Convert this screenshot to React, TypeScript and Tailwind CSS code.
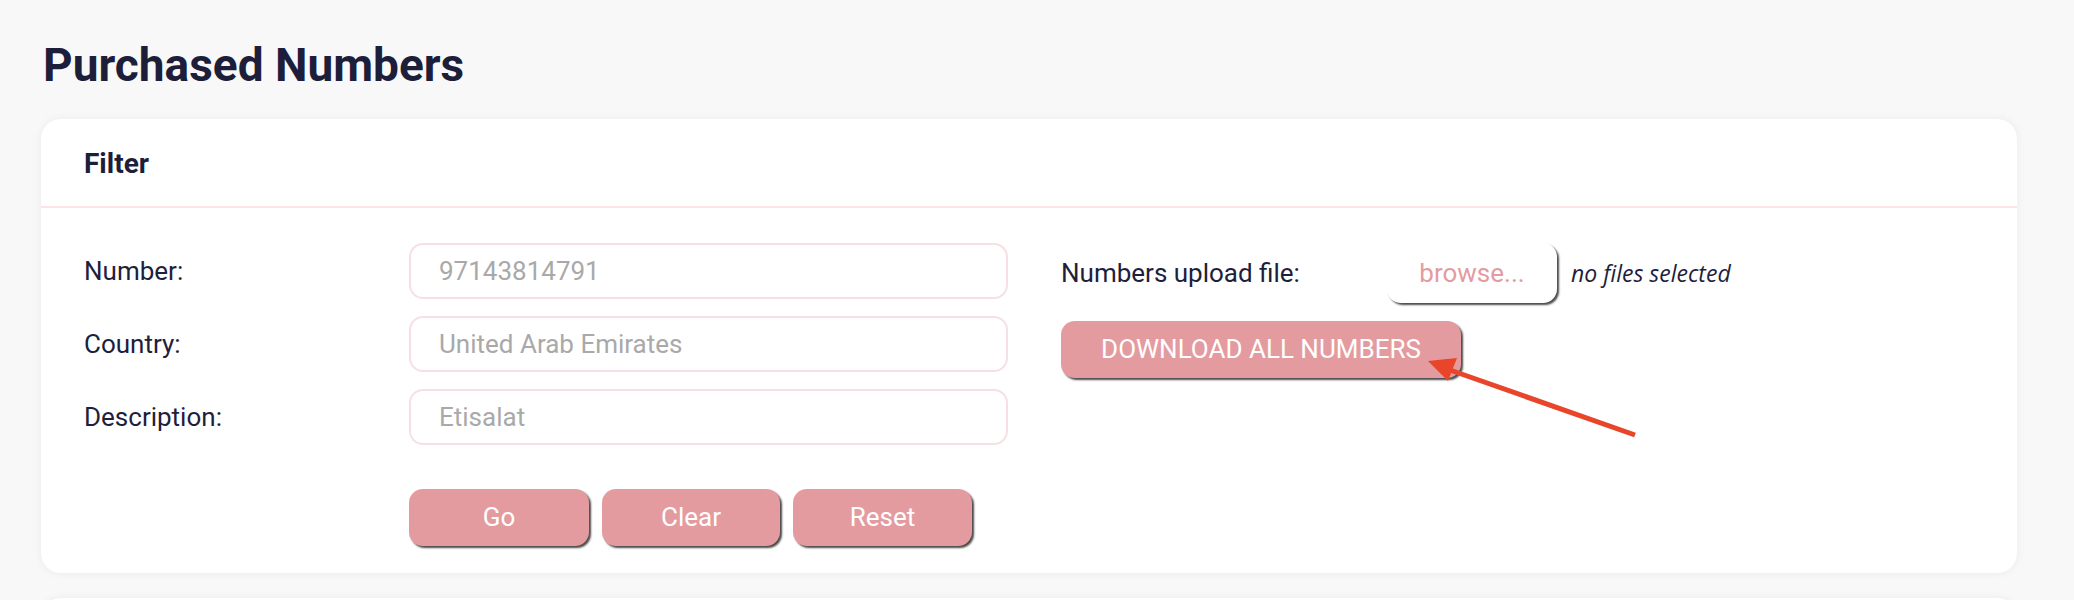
import React from "react";

const fields = [
  { label: "Number:", placeholder: "97143814791" },
  { label: "Country:", placeholder: "United Arab Emirates" },
  { label: "Description:", placeholder: "Etisalat" },
];

const actions = [
  { label: "Go", width: "w-[180px]" },
  { label: "Clear", width: "w-[178px]" },
  { label: "Reset", width: "w-[179px]" },
];

function Arrow() {
  // red annotation arrow pointing at the download button
  return (
    <svg
      className="absolute left-[1420px] top-[350px] pointer-events-none"
      width="230"
      height="95"
      viewBox="0 0 230 95"
    >
      <line x1="30" y1="20" x2="215" y2="85" stroke="#e8452a" strokeWidth="5" strokeLinecap="butt" />
      <polygon points="8,11 37,8 28,31" fill="#e8452a" />
    </svg>
  );
}

export default function App() {
  return (
    <div
      className="relative min-h-[600px] bg-[#f8f8f8] text-[#1e1f3d] overflow-hidden"
      style={{ fontFamily: "Roboto, 'Noto Sans', sans-serif" }}
    >
      <h1 className="pl-[43px] pt-[39px] text-[46px] leading-[52px] font-bold text-[#1d1e3a]">
        Purchased Numbers
      </h1>

      <div className="ml-[41px] mt-[28px] w-[1976px] rounded-[20px] bg-white shadow-[0_0_10px_rgba(0,0,0,0.06)]">
        <div className="flex h-[87px] items-center pl-[43px] pt-[2px]">
          <h2 className="text-[28px] leading-[32px] font-bold text-[#1d1e3a]">Filter</h2>
        </div>
        <div className="h-[2px] bg-[#fbe4e6]" />

        <div className="flex pl-[43px] pt-[35px] pb-[27px]">
          <div className="flex flex-col">
            <div className="flex flex-col gap-[17px]">
              {fields.map((f) => (
                <div key={f.label} className="flex items-center">
                  <label className="w-[325px] text-[26px] leading-[32px]">{f.label}</label>
                  <input
                    type="text"
                    placeholder={f.placeholder}
                    className="h-[56px] w-[599px] rounded-[14px] border-2 border-[#f7e0e3] bg-white pl-[28px] text-[26px] outline-none placeholder:text-[#a9a9a9]"
                  />
                </div>
              ))}
            </div>
            <div className="ml-[325px] mt-[44px] flex gap-[13px]">
              {actions.map((a) => (
                <button
                  key={a.label}
                  className={`${a.width} h-[57px] rounded-[14px] bg-[#e49b9f] text-[26px] text-white shadow-[2px_2px_2px_rgba(30,30,30,0.8)]`}
                >
                  {a.label}
                </button>
              ))}
            </div>
          </div>

          <div className="ml-[53px] flex flex-col">
            <div className="flex items-center">
              <span className="w-[326px] text-[26px] leading-[32px]">Numbers upload file:</span>
              <button className="h-[60px] w-[170px] rounded-[14px] bg-white text-[26px] text-[#e49b9f] shadow-[2px_2px_2px_rgba(30,30,30,0.8)]">
                browse...
              </button>
              <span
                className="ml-[14px] text-[23px] italic text-[#1e1f3d]"
                style={{ fontFamily: "'Open Sans', sans-serif" }}
              >
                no files selected
              </span>
            </div>
            <button className="mt-[18px] h-[57px] w-[400px] rounded-[14px] bg-[#e49b9f] text-[26px] text-white shadow-[2px_2px_2px_rgba(30,30,30,0.8)]">
              DOWNLOAD ALL NUMBERS
            </button>
          </div>
        </div>
      </div>

      <div className="ml-[41px] mt-[25px] h-[30px] w-[1976px] rounded-t-[20px] bg-white shadow-[0_0_10px_rgba(0,0,0,0.06)]" />

      <Arrow />
    </div>
  );
}
